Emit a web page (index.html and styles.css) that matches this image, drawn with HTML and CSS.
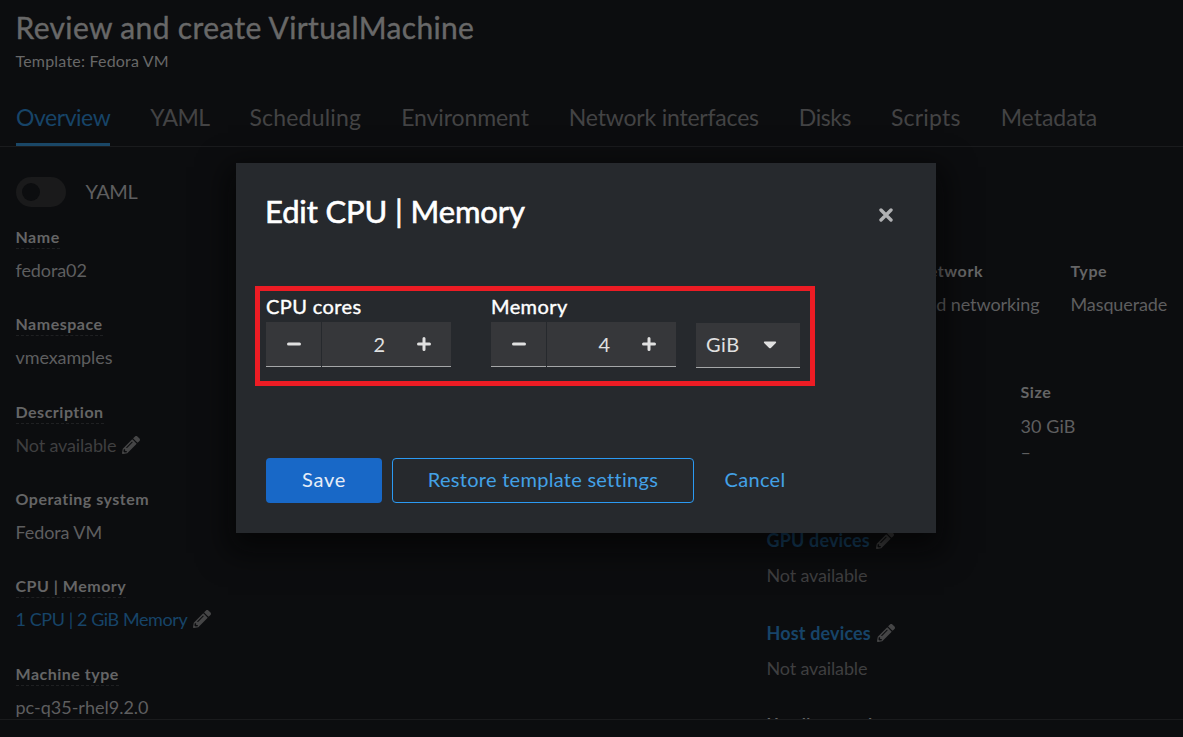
FILE: index.html
```
<!DOCTYPE html>
<html lang="en">
<head>
<meta charset="utf-8">
<title>Review and create VirtualMachine</title>
<link rel="stylesheet" href="styles.css">
</head>
<body>
<svg width="0" height="0" class="defs">
  <symbol id="pencil" viewBox="0 0 512 512"><path d="M497.900 142.100l-46.100 46.100c-4.700 4.700-12.300 4.700-17 0l-111-111c-4.700-4.700-4.700-12.300 0-17l46.100-46.100c18.700-18.700 49.100-18.700 67.900 0l60.100 60.100c18.800 18.700 18.800 49.100 0 67.900zM284.200 99.800L21.600 362.400.4 483.900c-2.900 16.400 11.400 30.600 27.800 27.800l121.500-21.300 262.600-262.600c4.700-4.700 4.700-12.300 0-17l-111-111c-4.800-4.700-12.400-4.700-17.100 0zM124.100 339.900c-5.500-5.500-5.500-14.300 0-19.800l154-154c5.500-5.500 14.300-5.500 19.800 0s5.500 14.300 0 19.800l-154 154c-5.500 5.500-14.300 5.500-19.800 0zM88 424h48v36.300l-64.500 11.300-31.100-31.100L51.700 376H88v48z"/></symbol>
  <symbol id="minus" viewBox="0 0 14 14"><path d="M1.500 7h11"/></symbol>
  <symbol id="plus" viewBox="0 0 14 14"><path d="M1.500 7h11M7 1.500v11"/></symbol>
</svg>
<div class="page">
  <header class="header">
    <h1 class="title">Review and create VirtualMachine</h1>
    <p class="subtitle">Template: Fedora VM</p>
  </header>
  <nav class="tabs">
    <a class="tab active tight">Overview</a>
    <a class="tab narrow">YAML</a>
    <a class="tab roomy">Scheduling</a>
    <a class="tab snug">Environment</a>
    <a class="tab long">Network interfaces</a>
    <a class="tab tight">Disks</a>
    <a class="tab wide">Scripts</a>
    <a class="tab">Metadata</a>
  </nav>
  <main class="content">
    <section class="left">
      <div class="switch-row"><span class="switch"><span class="knob"></span></span><span class="switch-label">YAML</span></div>
      <dl class="list">
        <div class="item"><dt><span class="term help">Name</span></dt><dd>fedora02</dd></div>
        <div class="item"><dt><span class="term help">Namespace</span></dt><dd>vmexamples</dd></div>
        <div class="item"><dt><span class="term help">Description</span></dt><dd class="muted">Not available<svg class="pencil"><use href="#pencil"/></svg></dd></div>
        <div class="item"><dt><span class="term">Operating system</span></dt><dd>Fedora VM</dd></div>
        <div class="item tall"><dt><span class="term help">CPU | Memory</span></dt><dd class="link cpu">1 CPU | 2 GiB Memory<svg class="pencil"><use href="#pencil"/></svg></dd></div>
        <div class="item"><dt><span class="term help">Machine type</span></dt><dd class="machine">pc-q35-rhel9.2.0</dd></div>
      </dl>
    </section>
    <section class="right">
      <div class="net-table">
        <span class="th">Name</span><span class="th">Network</span><span class="th">Type</span>
        <span>default</span><span>Pod networking</span><span>Masquerade</span>
      </div>
      <div class="disk-table">
        <span class="th">Name</span><span class="th">Drive</span><span class="th">Size</span>
        <span>rootdisk</span><span>Disk</span><span class="size">30 GiB</span>
        <span>cloudinit</span><span>Disk</span><span class="dash">–</span>
      </div>
      <dl class="devices">
        <div class="device"><dt class="link">GPU devices<svg class="pencil"><use href="#pencil"/></svg></dt><dd class="muted">Not available</dd></div>
        <div class="device last"><dt class="link">Host devices<svg class="pencil"><use href="#pencil"/></svg></dt><dd class="muted">Not available</dd></div>
        <div class="device"><dt class="headless">Headless mode</dt></div>
      </dl>
    </section>
  </main>
  <footer class="footer"></footer>
</div>
<div class="modal" role="dialog">
  <div class="modal-head">
    <h2 class="modal-title">Edit CPU | Memory</h2>
    <svg class="close" viewBox="0 0 14 14"><path d="M2 2l10 10M12 2L2 12"/></svg>
  </div>
  <div class="highlight">
    <div class="field">
      <label>CPU cores</label>
      <div class="stepper"><span class="btn"><svg><use href="#minus"/></svg></span><span class="num">2</span><span class="btn plus"><svg><use href="#plus"/></svg></span></div>
    </div>
    <div class="field">
      <label>Memory</label>
      <div class="stepper"><span class="btn"><svg><use href="#minus"/></svg></span><span class="num">4</span><span class="btn plus"><svg><use href="#plus"/></svg></span></div>
    </div>
    <div class="select"><span>GiB</span><svg viewBox="0 0 14 8"><path d="M1.500 0.500h11q1.200 .3 .4 1.400l-5 5q-.9 .8-1.800 0l-5-5q-.8-1.100.4-1.400z"/></svg></div>
  </div>
  <div class="actions">
    <span class="button primary">Save</span>
    <span class="button secondary">Restore template settings</span>
    <span class="button plain">Cancel</span>
  </div>
</div>
</body>
</html>
```
FILE: styles.css
```
* { box-sizing: border-box; }
body { margin: 0; background: #0c0d0f; font-family: Lato, "Open Sans", sans-serif; font-size: 18px; letter-spacing: -.1px; color: #5e5e5f; }
h1, h2, p, dl, dd, dt { margin: 0; font-weight: 400; }
.defs { position: absolute; }
.page { display: flex; flex-direction: column; height: 737px; overflow: hidden; }
.header { height: 88px; padding: 7px 16px 0 15.500px; }
.title { font-size: 30px; line-height: 40px; letter-spacing: .35px; color: #686868; white-space: nowrap; -webkit-text-stroke: .4px #686868; }
.subtitle { font-size: 16px; line-height: 24px; padding-top: 2px; letter-spacing: .2px; color: #686868; }
.tabs { display: flex; gap: 40px; height: 59px; padding: 0 16px; border-bottom: 1px solid #1a1b1d; flex: none; }
.tab { font-size: 23px; line-height: 59px; letter-spacing: 0; color: #434344; white-space: nowrap; height: 58px; }
.tab.tight { letter-spacing: -.45px; }
.tab.narrow { letter-spacing: -.6px; }
.tab.roomy { letter-spacing: .2px; }
.tab.snug { letter-spacing: -.1px; }
.tab.long { letter-spacing: -.2px; }
.tab.wide { letter-spacing: .2px; }
.tab.active { color: #174468; border-bottom: 3px solid #1a4767; }
.content { height: 572px; display: flex; overflow: hidden; flex: none; }
.left { width: 751px; padding: 30px 16px 0 15.500px; flex: none; }
.right { width: 432px; padding: 112px 0 0 15.500px; flex: none; }
.switch-row { display: flex; align-items: center; gap: 20px; height: 30px; font-size: 20px; letter-spacing: -.4px; }
.switch-label { padding-bottom: 2px; }
.switch { width: 50px; height: 30px; border-radius: 15px; background: #1a1a1b; padding: 6px; }
.knob { display: block; width: 18px; height: 18px; border-radius: 50%; background: #0c0d0f; }
.list { padding-top: 19px; }
.item { height: 87.300px; }
.item.tall { height: 88px; }
.item dt { height: 32px; display: flex; align-items: flex-start; }
.term { font-size: 16px; font-weight: 700; line-height: 21px; height: 23px; letter-spacing: .5px; color: #656566; }
.help { border-bottom: 1px dashed #1f2022; }
dd { line-height: 24px; display: flex; align-items: center; white-space: nowrap; }
.muted { color: #3f3f40; letter-spacing: -.15px; }
.link { color: #174468; }
.cpu { letter-spacing: -.42px; }
.machine { letter-spacing: 0; }
.pencil { width: 18px; height: 18px; margin-left: 6px; fill: #454546; }
.net-table { display: grid; grid-template-columns: 149.500px 154.500px auto; row-gap: 9px; line-height: 24px; white-space: nowrap; }
.th { font-size: 16px; font-weight: 700; letter-spacing: .6px; color: #656566; }
.disk-table { display: grid; grid-template-columns: 127px 127px auto; margin-top: 64px; line-height: 24px; grid-template-rows: 34px 26px 26px; }
.size { letter-spacing: .1px; }
.devices { padding-top: 62px; }
.device { height: 93px; }
.device.last { height: 90px; }
.device dt { display: flex; align-items: center; font-weight: 700; line-height: 24px; height: 35px; padding-bottom: 11px; letter-spacing: .15px; }
.device .headless { font-size: 16px; letter-spacing: .5px; color: #656566; }
.footer { flex: 1; border-top: 1px solid #1a1b1d; }
.modal { position: absolute; left: 236px; top: 163px; width: 700px; height: 370px; background: #26292d; box-shadow: 0 12px 28px 8px rgba(3,3,3,.64); color: #e0e0e0; }
.modal-head { height: 123px; padding: 28px 43px 0 29px; display: flex; justify-content: space-between; }
.modal-title { font-size: 31px; line-height: 40px; color: #fff; letter-spacing: -.12px; -webkit-text-stroke: .6px #fff; }
.close { width: 14px; height: 14px; margin-top: 17px; stroke: #b0b1b3; stroke-width: 3.400; stroke-linecap: round; }
.highlight { margin-left: 19px; width: 560px; height: 100px; border: 5px solid #ed1c24; padding: 3px 0 0 6px; display: flex; }
.field { width: 225px; }
.field + .field { width: 205px; }
.field label { display: block; font-size: 20px; line-height: 24px; height: 28px; letter-spacing: .4px; color: #fff; -webkit-text-stroke: .4px #fff; }
.stepper { display: flex; width: 185px; height: 45px; }
.btn, .num, .select { background: #36373a; border-bottom: 1px solid #a5a7a8; }
.btn { width: 55px; display: flex; align-items: center; justify-content: center; margin-right: 1px; }
.btn.plus { width: 54px; margin: 0; }
.btn svg { width: 14px; height: 14px; stroke: #e0e0e0; stroke-width: 3; stroke-linecap: round; }
.num { width: 75px; padding-right: 12px; font-size: 20px; line-height: 45px; text-align: right; }
.select { width: 104px; height: 45px; margin-top: 29px; padding: 0 23px 0 10px; display: flex; align-items: center; justify-content: space-between; font-size: 20px; letter-spacing: .5px; }
.select span { padding-bottom: 2px; }
.select svg { width: 14px; height: 8px; fill: #e0e0e0; }
.actions { display: flex; padding: 72px 0 0 30px; gap: 10px; }
.button { height: 45px; line-height: 41px; font-size: 20px; letter-spacing: .28px; border: 1px solid transparent; border-radius: 4px; text-align: center; color: #43a1e6; white-space: nowrap; }
.primary { background: #1868c7; color: #e6edf7; width: 116px; letter-spacing: .7px; }
.secondary { border-color: #2b9af3; width: 302px; }
.plain { width: 102px; }
```
